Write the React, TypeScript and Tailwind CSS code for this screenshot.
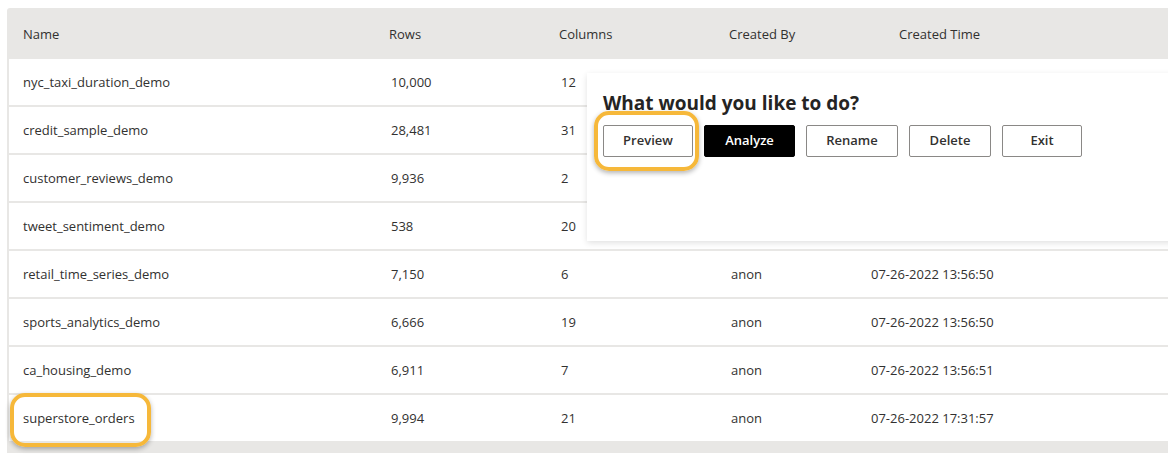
import React from "react";

type Dataset = {
  name: string;
  rows: string;
  columns: string;
  createdBy: string;
  createdTime: string;
};

const datasets: Dataset[] = [
  { name: "nyc_taxi_duration_demo", rows: "10,000", columns: "12", createdBy: "anon", createdTime: "07-26-2022 13:56:49" },
  { name: "credit_sample_demo", rows: "28,481", columns: "31", createdBy: "anon", createdTime: "07-26-2022 13:56:49" },
  { name: "customer_reviews_demo", rows: "9,936", columns: "2", createdBy: "anon", createdTime: "07-26-2022 13:56:49" },
  { name: "tweet_sentiment_demo", rows: "538", columns: "20", createdBy: "anon", createdTime: "07-26-2022 13:56:50" },
  { name: "retail_time_series_demo", rows: "7,150", columns: "6", createdBy: "anon", createdTime: "07-26-2022 13:56:50" },
  { name: "sports_analytics_demo", rows: "6,666", columns: "19", createdBy: "anon", createdTime: "07-26-2022 13:56:50" },
  { name: "ca_housing_demo", rows: "6,911", columns: "7", createdBy: "anon", createdTime: "07-26-2022 13:56:51" },
  { name: "superstore_orders", rows: "9,994", columns: "21", createdBy: "anon", createdTime: "07-26-2022 17:31:57" },
];

const actions = [
  { label: "Preview", w: "w-[90px]", dark: false },
  { label: "Analyze", w: "w-[91px]", dark: true },
  { label: "Rename", w: "w-[92px]", dark: false },
  { label: "Delete", w: "w-[82px]", dark: false },
  { label: "Exit", w: "w-[80px]", dark: false },
];

export default function App() {
  return (
    <div
      className="relative h-[454px] w-[1168px] overflow-hidden bg-white pl-[7px] pt-2 text-[13px] text-[#323130]"
      style={{ fontFamily: '"Open Sans", "Noto Sans", sans-serif' }}
    >
      <div className="rounded-tl-[3px] bg-[#e8e7e5] pb-3 pl-[2px]">
        {/* header */}
        <div className="flex h-[51px] items-center pt-[3px] font-medium text-[#323130]">
          <div className="w-[380px] pl-[14px]">Name</div>
          <div className="w-[170px]">Rows</div>
          <div className="w-[170px]">Columns</div>
          <div className="w-[170px]">Created By</div>
          <div>Created Time</div>
        </div>

        <div className="flex flex-col gap-[2px]">
          {datasets.map((d) => (
            <div key={d.name} className="flex h-[46px] items-center bg-white pt-[2px]">
              <div className="w-[382px] pl-[14px]">{d.name}</div>
              <div className="w-[170px]">{d.rows}</div>
              <div className="w-[170px]">{d.columns}</div>
              <div className="w-[140px]">{d.createdBy}</div>
              <div>{d.createdTime}</div>
            </div>
          ))}
        </div>
      </div>

      {/* highlight on superstore_orders */}
      <div className="pointer-events-none absolute left-[10px] top-[393px] h-[54px] w-[141px] rounded-[15px] border-[4px] border-[#f6b83a] shadow-[0_2px_5px_rgba(0,0,0,0.3)]" />

      {/* action panel */}
      <div className="absolute left-[587px] top-[73px] h-[168px] w-[600px] bg-white px-4 pt-[16px] shadow-[0_2px_6px_rgba(0,0,0,0.12)]">
        <div className="text-[19px] font-bold leading-[28px] text-[#252423]">What would you like to do?</div>
        <div className="mt-[8px] flex gap-[11px]">
          {actions.map((a) => (
            <button
              key={a.label}
              className={
                a.dark
                  ? `${a.w} h-[32px] rounded-[2px] border border-black bg-black text-[13px] font-semibold text-white`
                  : `${a.w} h-[32px] rounded-[2px] border border-[#8a8886] bg-white text-[13px] font-semibold text-[#323130]`
              }
            >
              {a.label}
            </button>
          ))}
        </div>
      </div>

      {/* highlight on Preview */}
      <div className="pointer-events-none absolute left-[594px] top-[111px] h-[60px] w-[105px] rounded-[15px] border-[4px] border-[#f6b83a] shadow-[0_2px_5px_rgba(0,0,0,0.3)]" />
    </div>
  );
}
